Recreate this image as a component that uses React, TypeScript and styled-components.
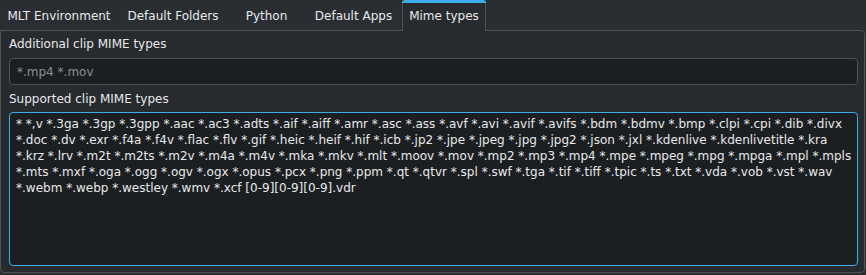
import styled, { createGlobalStyle } from "styled-components";

const GlobalStyle = createGlobalStyle`
  html, body {
    margin: 0;
    padding: 0;
    background: #2a2e32;
  }
  body {
    font-family: "DejaVu Sans", "Noto Sans", sans-serif;
    color: #fcfcfc;
  }
`;

const Page = styled.div`
  width: 866px;
  height: 275px;
  display: flex;
  flex-direction: column;
  background: #2a2e32;
  overflow: hidden;
`;

const TabBar = styled.div`
  display: flex;
  height: 30px;
  flex-shrink: 0;
`;

const Tab = styled.div<{ $active?: boolean; $width: number }>`
  position: relative;
  box-sizing: border-box;
  width: ${(p) => p.$width}px;
  display: flex;
  align-items: center;
  justify-content: center;
  font-size: 12px;
  color: #e8e9ea;
  border: 1px solid ${(p) => (p.$active ? "#4d5257" : "transparent")};
  border-bottom: none;
  border-radius: 4px 4px 0 0;
  background: ${(p) => (p.$active ? "#272a2e" : "transparent")};
  margin-bottom: ${(p) => (p.$active ? "-1px" : "0")};
  z-index: 1;
  ${(p) =>
    p.$active &&
    `
    &::before {
      content: "";
      position: absolute;
      left: -1px;
      right: -1px;
      top: -1px;
      height: 3px;
      background: #3daee9;
      border-radius: 4px 4px 0 0;
    }
  `}
`;

const Panel = styled.div`
  flex: 1;
  margin: 0 1px 2px 0;
  border: 1px solid #4d5257;
  border-radius: 0 4px 4px 4px;
  background: #272a2e;
  padding: 3px 6px 6px 7px;
  display: flex;
  flex-direction: column;
`;

const Label = styled.div`
  font-size: 12px;
  color: #e8e9ea;
  height: 20px;
  line-height: 20px;
  padding-left: 1px;
`;

const Input = styled.div`
  margin: 4px 0 4px 1px;
  height: 27px;
  box-sizing: border-box;
  border: 1px solid #4d5257;
  border-radius: 4px;
  background: #1c1f22;
  color: #8b8e91;
  font-size: 12px;
  padding: 0 7px;
  display: flex;
  align-items: center;
`;

const TextArea = styled.div`
  flex: 1;
  margin: 3px 0 0 1px;
  box-sizing: border-box;
  border: 1px solid #3daee9;
  border-radius: 4px;
  background: #1c1f22;
  color: #e8e9ea;
  font-size: 12px;
  line-height: 16px;
  padding: 3px 6px;
  white-space: pre;
`;

const supported = [
  "* *,v *.3ga *.3gp *.3gpp *.aac *.ac3 *.adts *.aif *.aiff *.amr *.asc *.ass *.avf *.avi *.avif *.avifs *.bdm *.bdmv *.bmp *.clpi *.cpi *.dib *.divx",
  "*.doc *.dv *.exr *.f4a *.f4v *.flac *.flv *.gif *.heic *.heif *.hif *.icb *.jp2 *.jpe *.jpeg *.jpg *.jpg2 *.json *.jxl *.kdenlive *.kdenlivetitle *.kra",
  "*.krz *.lrv *.m2t *.m2ts *.m2v *.m4a *.m4v *.mka *.mkv *.mlt *.moov *.mov *.mp2 *.mp3 *.mp4 *.mpe *.mpeg *.mpg *.mpga *.mpl *.mpls",
  "*.mts *.mxf *.oga *.ogg *.ogv *.ogx *.opus *.pcx *.png *.ppm *.qt *.qtvr *.spl *.swf *.tga *.tif *.tiff *.tpic *.ts *.txt *.vda *.vob *.vst *.wav",
  "*.webm *.webp *.westley *.wmv *.xcf [0-9][0-9][0-9].vdr",
];

const tabs = [
  { name: "MLT Environment", width: 118 },
  { name: "Default Folders", width: 110 },
  { name: "Python", width: 77 },
  { name: "Default Apps", width: 97 },
  { name: "Mime types", width: 84, active: true },
];

export default function App() {
  return (
    <>
      <GlobalStyle />
      <Page>
        <TabBar>
          {tabs.map((t) => (
            <Tab key={t.name} $active={t.active} $width={t.width}>
              {t.name}
            </Tab>
          ))}
        </TabBar>
        <Panel>
          <Label>Additional clip MIME types</Label>
          <Input>*.mp4 *.mov</Input>
          <Label>Supported clip MIME types</Label>
          <TextArea>{supported.join("\n")}</TextArea>
        </Panel>
      </Page>
    </>
  );
}
